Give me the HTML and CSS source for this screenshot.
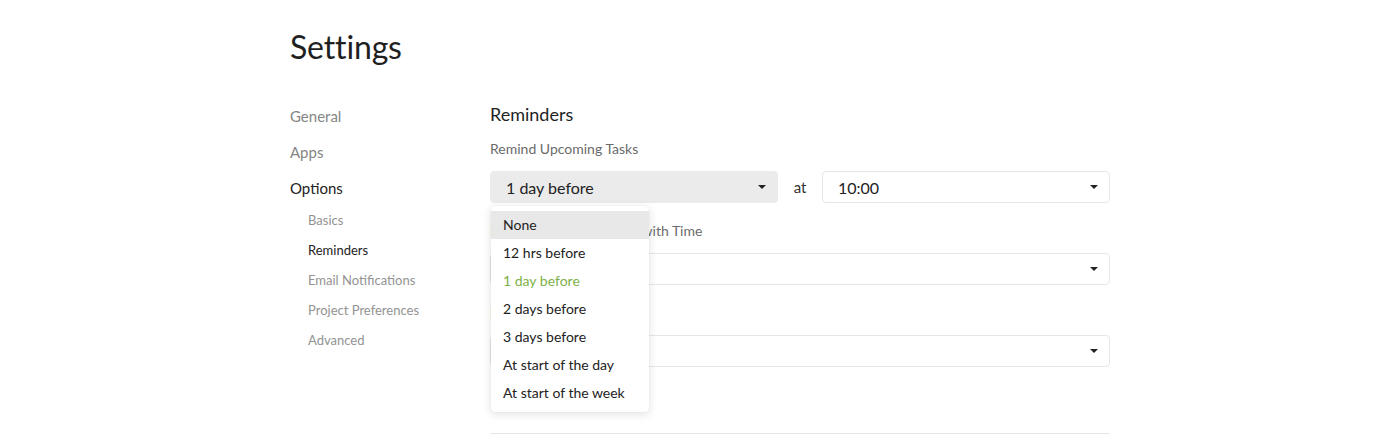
FILE: index.html
```html
<!DOCTYPE html>
<html lang="en">
<head>
<meta charset="utf-8">
<title>Settings</title>
<link rel="stylesheet" href="styles.css">
</head>
<body>
<div class="page">
  <h1 class="title">Settings</h1>
  <div class="layout">
    <nav class="sidebar">
      <a class="nav-item">General</a>
      <a class="nav-item">Apps</a>
      <a class="nav-item active">Options</a>
      <div class="subnav">
        <a class="sub-item">Basics</a>
        <a class="sub-item active">Reminders</a>
        <a class="sub-item">Email Notifications</a>
        <a class="sub-item">Project Preferences</a>
        <a class="sub-item">Advanced</a>
      </div>
    </nav>
    <main class="content">
      <h2 class="section-title">Reminders</h2>
      <div class="field">
        <div class="label">Remind Upcoming Tasks</div>
        <div class="row">
          <div class="select-wrap">
            <div class="select filled"><span>1 day before</span><i class="caret"></i></div>
            <ul class="menu">
              <li class="menu-item hover">None</li>
              <li class="menu-item">12 hrs before</li>
              <li class="menu-item selected">1 day before</li>
              <li class="menu-item">2 days before</li>
              <li class="menu-item">3 days before</li>
              <li class="menu-item">At start of the day</li>
              <li class="menu-item">At start of the week</li>
            </ul>
          </div>
          <span class="at">at</span>
          <div class="select-wrap">
            <div class="select"><span>10:00</span><i class="caret"></i></div>
          </div>
        </div>
      </div>
      <div class="field">
        <div class="label">Remind Upcoming Tasks with Time</div>
        <div class="select"><span>On time</span><i class="caret"></i></div>
      </div>
      <div class="field">
        <div class="label">Default Reminder</div>
        <div class="select"><span>None</span><i class="caret"></i></div>
      </div>
      <div class="spacer"></div>
      <hr class="divider">
    </main>
  </div>
</div>
</body>
</html>
```

FILE: styles.css
```css
* { box-sizing: border-box; }
html, body { margin: 0; padding: 0; background: #fff; }
body {
  font-family: Lato, "Open Sans", "Liberation Sans", sans-serif;
  color: #222;
  overflow: hidden;
}
.page {
  padding-left: 290px;
  padding-top: 27px;
}
.title {
  margin: 0;
  font-size: 32px;
  font-weight: 400;
  line-height: 40px;
  color: #1f1f1f;
  letter-spacing: -0.15px;
}
.layout {
  display: flex;
  margin-top: 36px;
}
.sidebar {
  width: 200px;
  display: flex;
  flex-direction: column;
  padding-top: 3px;
}
.nav-item {
  font-size: 15px;
  line-height: 20px;
  color: #858585;
  margin-bottom: 16px;
}
.nav-item.active { color: #222; }
.subnav {
  display: flex;
  flex-direction: column;
  padding-left: 18px;
  margin-top: -3px;
}
.sub-item {
  font-size: 13px;
  line-height: 18px;
  color: #939393;
  margin-bottom: 12px;
}
.sub-item.active { color: #222; }
.content {
  width: 620px;
  display: flex;
  flex-direction: column;
}
.section-title {
  margin: 0;
  font-size: 18px;
  font-weight: 400;
  line-height: 22px;
  color: #1f1f1f;
}
.field {
  display: flex;
  flex-direction: column;
  margin-top: 15px;
}
.field + .field { margin-top: 19px; }
.label {
  font-size: 14px;
  line-height: 18px;
  color: #6b6b6b;
  margin-bottom: 13px;
}
.row {
  display: flex;
  align-items: center;
}
.select-wrap {
  position: relative;
  width: 288px;
}
.at {
  width: 44px;
  text-align: center;
  font-size: 15px;
  color: #333;
}
.select {
  height: 32px;
  border: 1px solid #e6e6e6;
  border-radius: 4px;
  background: #fff;
  display: flex;
  align-items: center;
  justify-content: space-between;
  padding: 0 11px 0 15px;
  font-size: 16px;
  color: #222;
}
.select.filled {
  background: #ebebeb;
  border-color: #ebebeb;
}
.caret {
  width: 0;
  height: 0;
  border-left: 4px solid transparent;
  border-right: 4px solid transparent;
  border-top: 4px solid #222;
}
.menu {
  position: absolute;
  top: 35px;
  left: 1px;
  width: 158px;
  margin: 0;
  padding: 5px 0;
  list-style: none;
  background: #fff;
  border-radius: 4px;
  box-shadow: 0 2px 10px rgba(0, 0, 0, 0.12), 0 0 1px rgba(0, 0, 0, 0.12);
  z-index: 10;
}
.menu-item {
  height: 28px;
  line-height: 28px;
  padding-left: 12px;
  font-size: 14px;
  color: #222;
}
.menu-item.hover { background: #e8e8e8; }
.menu-item.selected { color: #7db148; }
.spacer { height: 66px; }
.divider {
  margin: 0;
  border: 0;
  border-top: 1px solid #e6e6e6;
}
```
